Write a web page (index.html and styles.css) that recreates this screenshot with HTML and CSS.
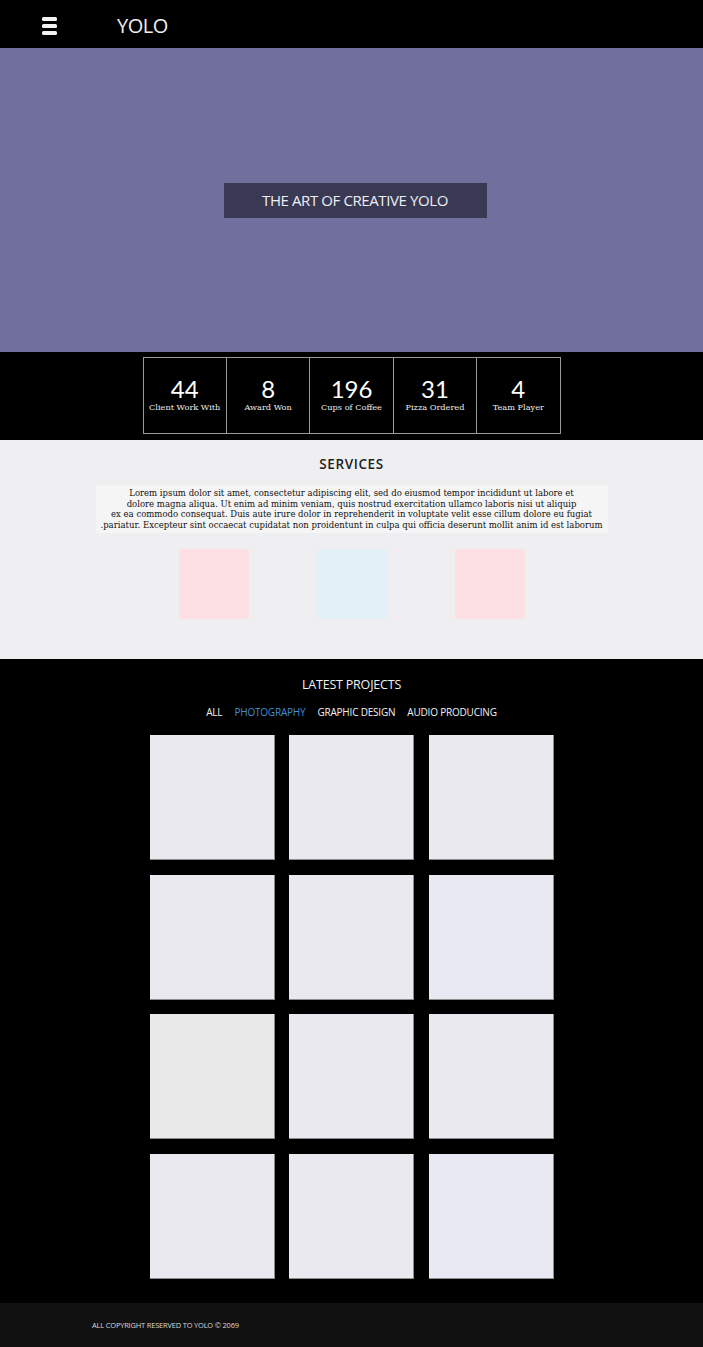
FILE: index.html
```html
<!DOCTYPE html>
<html lang="en">
<head>
    <meta charset="utf-8" />
    <title>YOLO</title>
    <meta name="viewport" content="width=device-width, initial-scale=1" />
    <link rel="stylesheet" href="styles.css">
</head>
<body>
<header class="topbar">
    <div class="burger"><span></span><span></span><span></span></div>
    <div class="logo">YOLO</div>
</header>

<section class="hero">
    <div class="hero-title">THE ART OF CREATIVE YOLO</div>
</section>

<section class="stats">
    <div class="stats-box">
        <div class="stat"><div class="num">44</div><div class="label">Client Work With</div></div>
        <div class="stat"><div class="num">8</div><div class="label">Award Won</div></div>
        <div class="stat"><div class="num">196</div><div class="label">Cups of Coffee</div></div>
        <div class="stat"><div class="num">31</div><div class="label">Pizza Ordered</div></div>
        <div class="stat"><div class="num">4</div><div class="label">Team Player</div></div>
    </div>
</section>

<section class="services">
    <h2>SERVICES</h2>
    <p class="intro">
        Lorem ipsum dolor sit amet, consectetur adipiscing elit, sed do eiusmod tempor incididunt ut labore et<br>
        dolore magna aliqua. Ut enim ad minim veniam, quis nostrud exercitation ullamco laboris nisi ut aliquip<br>
        ex ea commodo consequat. Duis aute irure dolor in reprehenderit in voluptate velit esse cillum dolore eu fugiat<br>
        .pariatur. Excepteur sint occaecat cupidatat non proidentunt in culpa qui officia deserunt mollit anim id est laborum
    </p>
    <div class="service-icons">
        <div class="svc pink"></div>
        <div class="svc blue"></div>
        <div class="svc pink"></div>
    </div>
</section>

<section class="projects">
    <h2>LATEST PROJECTS</h2>
    <ul class="filters">
        <li>ALL</li>
        <li class="active">PHOTOGRAPHY</li>
        <li>GRAPHIC DESIGN</li>
        <li>AUDIO PRODUCING</li>
    </ul>
    <div class="grid">
        <div class="tile"></div>
        <div class="tile"></div>
        <div class="tile"></div>
        <div class="tile"></div>
        <div class="tile"></div>
        <div class="tile lilac"></div>
        <div class="tile grey"></div>
        <div class="tile"></div>
        <div class="tile"></div>
        <div class="tile"></div>
        <div class="tile"></div>
        <div class="tile lilac"></div>
    </div>
</section>

<footer class="footer">ALL COPYRIGHT RESERVED TO YOLO &copy; 2069</footer>
</body>
</html>
```

FILE: styles.css
```css
body {
    margin: 0; padding: 0;
    background-color: #000;
    font: 14px "Open Sans", "Liberation Sans", sans-serif;
}
h2 { margin: 0; }

.topbar {
    height: 48px; background-color: #000;
    display: flex; align-items: center;
    padding-left: 42px; gap: 60px;
}
.burger { display: flex; flex-direction: column; gap: 3px; margin-top: 4px; }
.burger span {
    display: block; width: 15px; height: 4px;
    background-color: #f2f2f2; border-radius: 1.5px;
}
.logo { color: #f0f0f0; font-size: 20px; line-height: 24px; margin-top: 4px; letter-spacing: -0.5px; }

.hero {
    height: 304px; background-color: #716f9d;
    display: flex; align-items: center; justify-content: center;
}
.hero-title {
    width: 263px; height: 35px; line-height: 35px; margin-left: 7px;
    background-color: #3a3954; color: #eeeef4;
    text-align: center; font-size: 15px; letter-spacing: -0.4px;
}

.stats { height: 88px; box-sizing: border-box; padding-top: 5px; }
.stats-box {
    width: 418px; height: 77px; margin: 0 auto; box-sizing: border-box;
    border: 1px solid #9a9a9a; display: flex;
}
.stat {
    flex: 1; display: flex; flex-direction: column;
    align-items: center; justify-content: center;
    border-left: 1px solid #9a9a9a; color: #fff; padding-bottom: 2px;
}
.stat:first-child { border-left: none; }
.num { font-family: Lato, sans-serif; font-weight: 400; font-size: 24px; line-height: 22px; }
.label {
    font-family: "DejaVu Serif", serif; font-size: 8.2px; line-height: 10px;
    margin-top: 2px; color: #eee; white-space: nowrap;
}

.services {
    height: 219px; box-sizing: border-box; padding-top: 14px;
    background-color: #efeff1; text-align: center;
}
.services h2 {
    font-size: 13.5px; font-weight: 600; line-height: 20px;
    color: #222; letter-spacing: 0.6px;
}
.intro {
    width: 512px; margin: 11px auto 0; padding: 3px 0; box-sizing: border-box;
    background-color: #f5f5f5; color: #111;
    font-family: "DejaVu Serif", serif; font-size: 8.5px; line-height: 10.5px;
}
.service-icons { display: flex; justify-content: center; gap: 68px; margin-top: 16px; }
.svc { width: 70px; height: 70px; }
.svc.pink { background-color: #fde0e4; }
.svc.blue { background-color: #e4f0f8; }

.projects {
    height: 644px; box-sizing: border-box; padding-top: 16px;
    background-color: #000; text-align: center; color: #f2f2f2;
}
.projects h2 { font-size: 12.5px; font-weight: 400; line-height: 20px; letter-spacing: -0.2px; }
.filters {
    list-style: none; margin: 10px 0 0; padding: 0;
    display: flex; justify-content: center; gap: 12px;
    font-size: 10px; line-height: 14px; letter-spacing: -0.2px;
}
.filters li.active { color: #3f8ed6; }
.grid {
    display: grid; grid-template-columns: repeat(3, 125px);
    gap: 14.5px; justify-content: center; margin-top: 16px;
}
.tile {
    height: 125px; background-color: #eae9ef;
    box-sizing: border-box; border-right: 1px solid #8c8c8c; border-bottom: 1px solid #8c8c8c;
}
.tile.lilac { background-color: #e9e9f4; }
.tile.grey { background-color: #e9e9e9; }

.footer {
    height: 44px; background-color: #111; color: #d8d8d8;
    padding-left: 92px; font-size: 7.5px; line-height: 44px; letter-spacing: -0.2px;
}
```
